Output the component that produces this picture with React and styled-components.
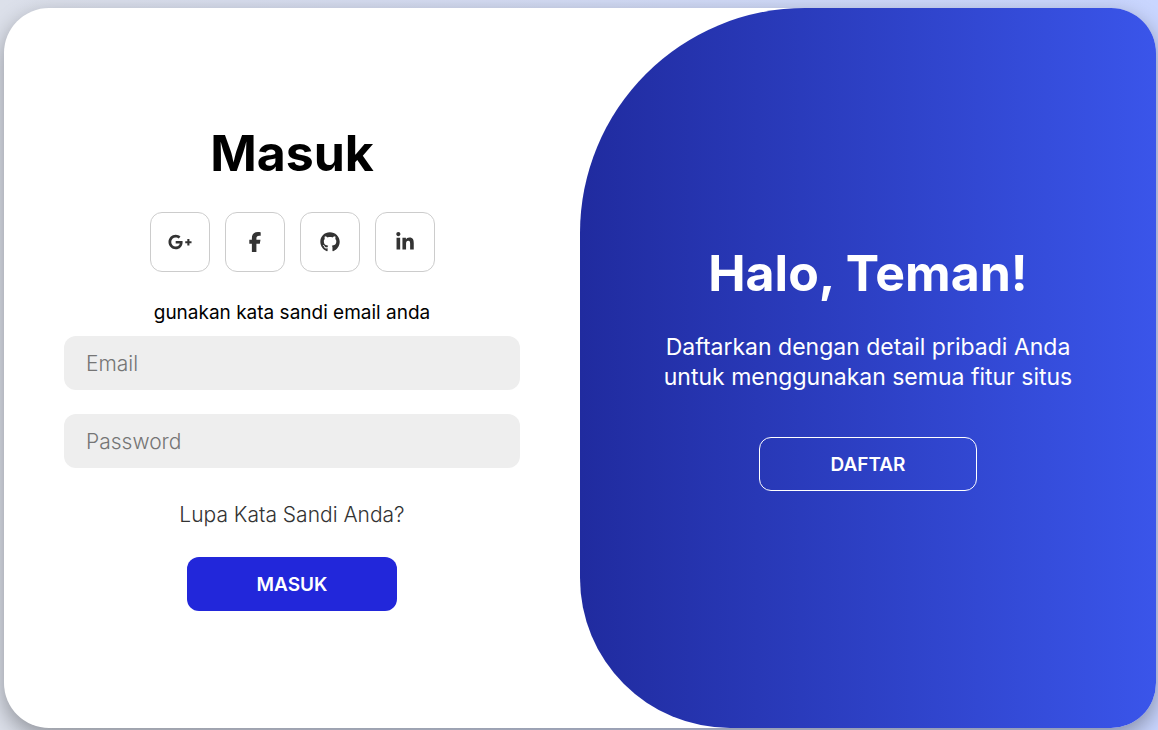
import React from "react";
import styled, { createGlobalStyle, css } from "styled-components";
import { FaGooglePlusG, FaFacebookF, FaGithub, FaLinkedinIn } from "react-icons/fa6";

const GlobalStyle = createGlobalStyle`
  * {
    box-sizing: border-box;
    margin: 0;
  }

  body {
    background: linear-gradient(to right, #dce0ea, #c9d6ff);
    font-family: Inter, "Open Sans", sans-serif;
  }
`;

const Page = styled.div`
  display: flex;
  min-height: 100vh;
  padding: 8px 2px 2px 4px;
`;

const Card = styled.main`
  display: grid;
  grid-template-columns: 1fr 1fr;
  flex: 1;
  background: #fff;
  border-radius: 45px;
  box-shadow: 0 8px 22px rgba(0, 0, 0, 0.35);
  overflow: hidden;
`;

const column = css`
  display: flex;
  flex-direction: column;
  align-items: center;
  justify-content: center;
  padding: 0 60px;
  text-align: center;
`;

const SignInForm = styled.form`
  ${column}
`;

const WelcomePanel = styled.section`
  ${column}
  color: #fff;
  background: linear-gradient(to right, #202b9f, #3a55ea);
  border-radius: 225px 0 0 150px;
`;

const Title = styled.h1`
  margin-bottom: 31px;
  font-size: 50px;
  font-weight: 700;
  line-height: 56px;
`;

const SocialLinks = styled.nav`
  display: flex;
  gap: 15px;
  margin-bottom: 30px;
`;

const SocialLink = styled.a`
  display: flex;
  align-items: center;
  justify-content: center;
  width: 60px;
  height: 60px;
  border: 1px solid #ccc;
  border-radius: 12px;
  color: #333;

  svg {
    flex: none;
    width: auto;
    height: ${({ $iconSize }) => $iconSize}px;
  }
`;

const Hint = styled.p`
  margin-bottom: 12px;
  font-size: 19px;
  line-height: 22px;
`;

const Field = styled.input`
  width: 100%;
  height: 54px;
  margin-bottom: 24px;
  padding: 0 22px;
  border: 0;
  border-radius: 12px;
  outline: none;
  background: #eee;
  font-family: inherit;
  font-size: 21px;
  font-weight: 300;

  &::placeholder {
    color: #757575;
  }
`;

const ForgotLink = styled.a`
  margin: 11px 0 30px;
  color: #333;
  font-size: 21px;
  font-weight: 300;
  line-height: 24px;
  text-decoration: none;
`;

const Intro = styled.p`
  margin-bottom: 45px;
  font-size: 23px;
  line-height: 30px;
`;

const Button = styled.button`
  min-width: ${({ $outline }) => ($outline ? "218px" : "210px")};
  height: 54px;
  padding: 0 60px;
  border: ${({ $outline }) => ($outline ? "1px solid #fff" : "0")};
  border-radius: 12px;
  background: ${({ $outline }) => ($outline ? "transparent" : "#2227da")};
  color: #fff;
  font-family: inherit;
  font-size: 19px;
  font-weight: 600;
  text-transform: uppercase;
  cursor: pointer;
`;

const socials = [
  { name: "Google Plus", Icon: FaGooglePlusG, size: 24 },
  { name: "Facebook", Icon: FaFacebookF, size: 20 },
  { name: "GitHub", Icon: FaGithub, size: 20 },
  { name: "LinkedIn", Icon: FaLinkedinIn, size: 20 },
];

export default function App() {
  return (
    <>
      <GlobalStyle />
      <Page>
        <Card>
          <SignInForm onSubmit={(event) => event.preventDefault()}>
            <Title>Masuk</Title>
            <SocialLinks>
              {socials.map(({ name, Icon, size }) => (
                <SocialLink key={name} href="#" aria-label={name} $iconSize={size}>
                  <Icon />
                </SocialLink>
              ))}
            </SocialLinks>
            <Hint>gunakan kata sandi email anda</Hint>
            <Field type="email" placeholder="Email" aria-label="Email" />
            <Field type="password" placeholder="Password" aria-label="Password" />
            <ForgotLink href="#">Lupa Kata Sandi Anda?</ForgotLink>
            <Button type="submit">Masuk</Button>
          </SignInForm>
          <WelcomePanel>
            <Title as="h2">Halo, Teman!</Title>
            <Intro>
              Daftarkan dengan detail pribadi Anda untuk menggunakan semua fitur situs
            </Intro>
            <Button type="button" $outline>
              Daftar
            </Button>
          </WelcomePanel>
        </Card>
      </Page>
    </>
  );
}
